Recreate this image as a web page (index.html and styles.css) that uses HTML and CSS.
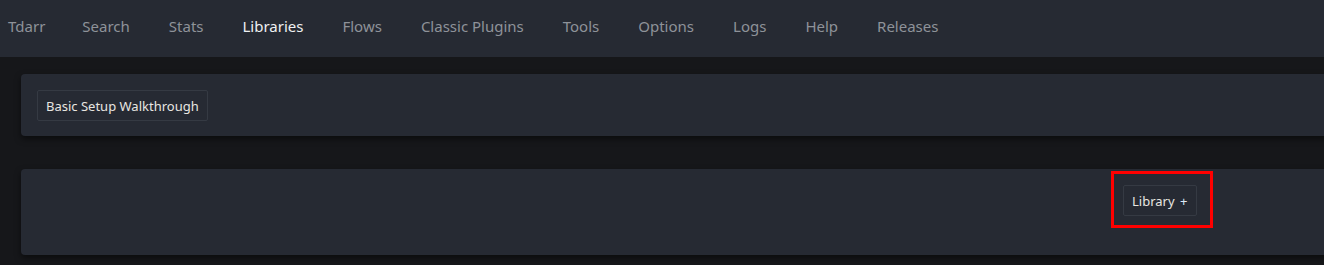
FILE: index.html
```html
<!DOCTYPE html>
<html lang="en">
<head>
    <meta charset="UTF-8">
    <meta name="viewport" content="width=device-width, initial-scale=1.0">
    <title>Tdarr - Libraries</title>
    <link rel="stylesheet" href="styles.css">
</head>
<body>
    <nav class="topbar">
        <a href="#">Tdarr</a>
        <a href="#">Search</a>
        <a href="#">Stats</a>
        <a href="#" class="active">Libraries</a>
        <a href="#">Flows</a>
        <a href="#">Classic Plugins</a>
        <a href="#">Tools</a>
        <a href="#">Options</a>
        <a href="#">Logs</a>
        <a href="#">Help</a>
        <a href="#">Releases</a>
    </nav>

    <div class="card card-setup">
        <button class="btn">Basic Setup Walkthrough</button>
    </div>

    <div class="card card-libraries">
        <div class="library-add">
            <span class="highlight">
                <button class="btn">Library <span class="plus">+</span></button>
            </span>
        </div>
    </div>
</body>
</html>
```

FILE: styles.css
```css
body {
    margin: 0;
    background-color: #16171a;
    font-family: "Noto Sans", "Open Sans", sans-serif;
    height: 265px;
    overflow: hidden;
}
.topbar {
    height: 57px;
    background-color: #262a33;
    display: flex;
    align-items: center;
    padding-left: 8px;
    gap: 39px;
    padding-bottom: 6px;
    box-sizing: border-box;
}
.topbar a {
    color: #8e9299;
    text-decoration: none;
    font-size: 15px;
}
.topbar a:first-child {
    margin-right: -2px;
}
.topbar a.active {
    color: #eef0f2;
}
.card {
    background-color: #262a33;
    margin-left: 21px;
    width: 1400px;
    border-radius: 4px;
    box-shadow: 0 3px 6px rgba(0, 0, 0, 0.5);
    box-sizing: border-box;
}
.card-setup {
    margin-top: 17px;
    height: 62px;
    padding: 16px;
}
.card-libraries {
    margin-top: 33px;
    height: 86px;
    padding-top: 2px;
}
.btn {
    background-color: #262a33;
    color: #e8e6e1;
    border: 1px solid #353a43;
    border-radius: 2px;
    font-family: "Noto Sans", "Open Sans", sans-serif;
    font-size: 13px;
    height: 31px;
    padding: 0 8px;
}
.btn .plus {
    margin-left: 2px;
    color: #dfe8f5;
}
.library-add {
    padding-left: 1090px;
}
.highlight {
    display: inline-block;
    border: 3px solid #ff0000;
    padding: 11px 13px 9px 9px;
}
.highlight .btn {
    display: block;
    padding: 0 9px 0 8px;
}
```
